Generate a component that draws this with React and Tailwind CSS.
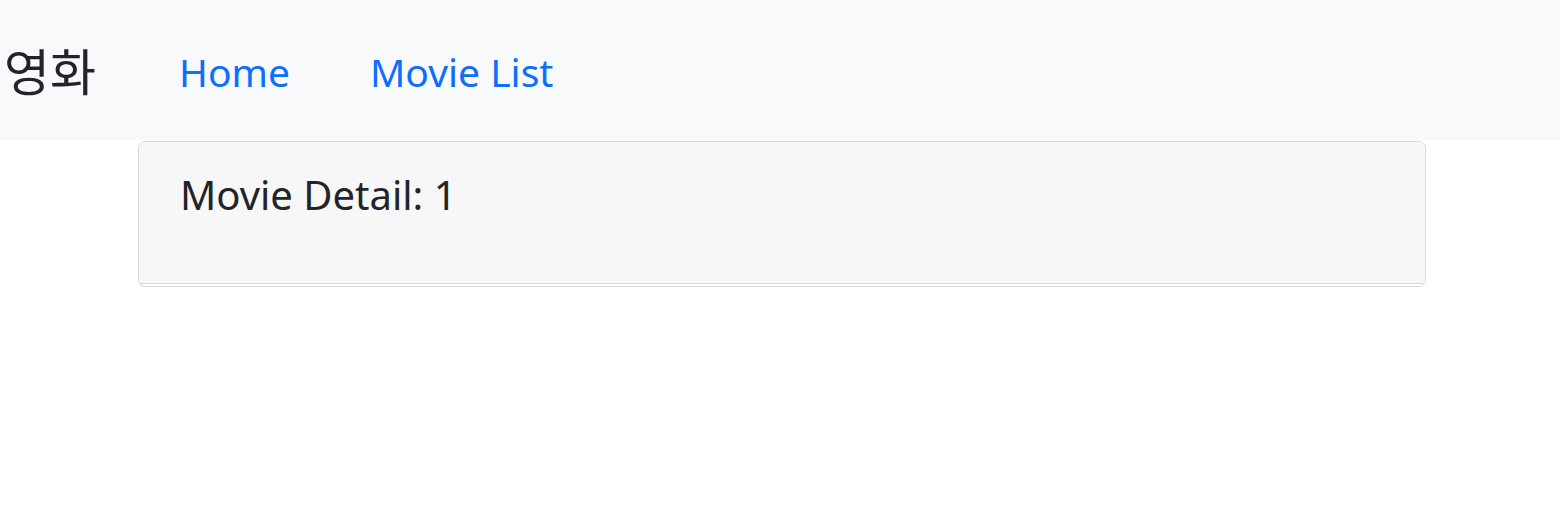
export default function App() {
  return (
    <div className="min-h-[515px] bg-white" style={{ fontFamily: '"Noto Sans", "Noto Sans CJK KR", sans-serif' }}>
      <nav className="h-[140px] bg-[#f8f9fa] flex items-center">
        <span className="ml-[4px] text-[50px] leading-none text-[#212529] pb-[2px]" style={{ fontFamily: '"Noto Sans CJK KR", sans-serif' }}>영화</span>
        <a className="ml-[83px] text-[39px] leading-none text-[#0d6efd] pt-[2px]">Home</a>
        <a className="ml-[80px] text-[39px] leading-none text-[#0d6efd] pt-[2px]">Movie List</a>
      </nav>
      <div className="mx-[138px] mt-px w-[1288px] rounded-[7px] border border-[#d8d8d8] bg-white overflow-hidden">
        <div className="h-[142px] bg-[#f7f7f7] border-b border-[#d8d8d8] px-[41px] pt-[26px]">
          <h3 className="text-[40px] leading-[54px] text-[#212529]">Movie Detail: 1</h3>
        </div>
        <div className="h-[2px]"></div>
      </div>
    </div>
  );
}
